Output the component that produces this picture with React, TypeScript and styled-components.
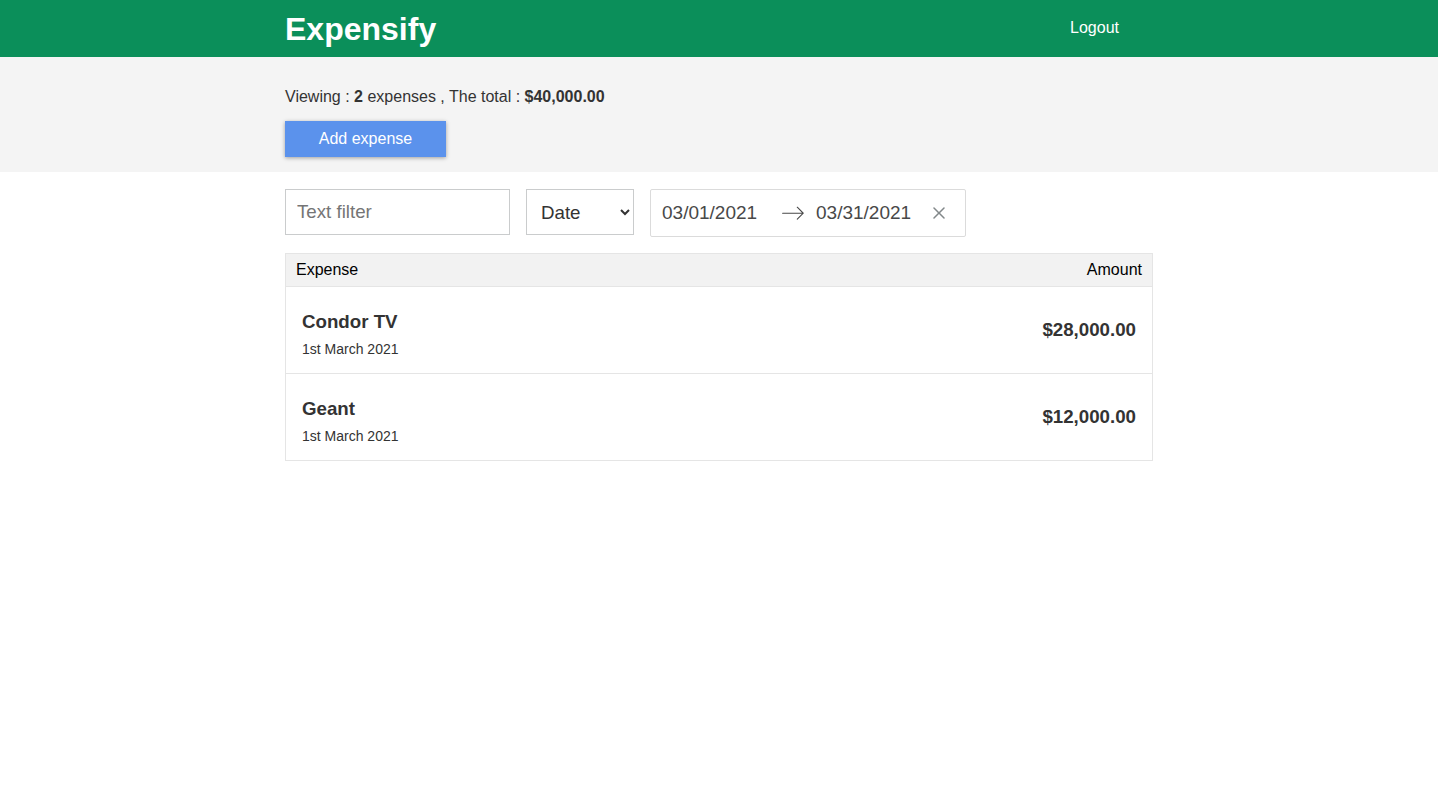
import React from "react";
import styled, { createGlobalStyle } from "styled-components";

const GlobalStyle = createGlobalStyle`
  * { box-sizing: border-box; }
  body {
    margin: 0;
    font-family: "Liberation Sans", Arial, sans-serif;
    color: #333333;
    background: #ffffff;
  }
`;

const Container = styled.div`
  width: 868px;
  margin: 0 auto;
`;

const TopBar = styled.header`
  background: #0b8f5a;
`;

const TopBarInner = styled(Container)`
  height: 57px;
  display: flex;
  align-items: center;
  justify-content: space-between;
`;

const Logo = styled.h1`
  margin: 0;
  font-size: 32px;
  font-weight: 700;
  color: #ffffff;
  line-height: 1;
`;

const LogoutButton = styled.button`
  background: none;
  border: none;
  color: #ffffff;
  font-family: "Liberation Sans", Arial, sans-serif;
  font-size: 16px;
  padding: 6px 34px 8px 8px;
  cursor: pointer;
`;

const Summary = styled.section`
  background: #f4f4f4;
  padding: 31px 0 15px;
`;

const SummaryText = styled.p`
  margin: 0 0 15px;
  font-size: 16px;
  line-height: 18px;
  color: #333333;
  b { font-weight: 700; }
`;

const AddButton = styled.button`
  width: 161px;
  height: 36px;
  background: #5b92ec;
  color: #ffffff;
  border: none;
  font-family: "Liberation Sans", Arial, sans-serif;
  font-size: 16px;
  box-shadow: 0 1px 4px rgba(0, 0, 0, 0.35);
  cursor: pointer;
`;

const Filters = styled(Container)`
  display: flex;
  align-items: flex-start;
  gap: 16px;
  margin-top: 17px;
`;

const TextInput = styled.input`
  width: 225px;
  height: 46px;
  border: 1px solid #cacccd;
  padding: 0 11px;
  font-family: "Liberation Sans", Arial, sans-serif;
  font-size: 18.72px;
  color: #333;
  outline: none;
  &::placeholder { color: #757575; }
`;

const SortSelect = styled.select`
  width: 108px;
  height: 46px;
  border: 1px solid #cacccd;
  background: #ffffff;
  padding: 0 10px;
  font-family: "Liberation Sans", Arial, sans-serif;
  font-size: 18.72px;
  color: #333;
  outline: none;
`;

const RangeBox = styled.div`
  position: relative;
  display: flex;
  align-items: center;
  border: 1px solid #dbdbdb;
  border-radius: 2px;
  padding-right: 30px;
  background: #ffffff;
`;

const DateInput = styled.input`
  width: 130px;
  padding: 11px 11px 9px;
  border: none;
  border-bottom: 2px solid transparent;
  font-family: "Liberation Sans", Arial, sans-serif;
  font-size: 19px;
  line-height: 24px;
  color: #484848;
  background: transparent;
  outline: none;
`;

const ArrowIcon = styled.svg`
  width: 24px;
  height: 24px;
  fill: #484848;
  flex-shrink: 0;
`;

const ClearButton = styled.button`
  position: absolute;
  right: 0;
  top: 50%;
  transform: translateY(-50%);
  margin: 0 10px 0 5px;
  padding: 10px;
  background: none;
  border: 0;
  display: flex;
  cursor: pointer;
`;

const ClearIcon = styled.svg`
  width: 12px;
  height: 12px;
  fill: #82888a;
`;

const Table = styled(Container)`
  margin-top: 16px;
  border: 1px solid #e5e5e5;
`;

const TableHead = styled.div`
  display: flex;
  justify-content: space-between;
  background: #f2f2f2;
  padding: 7px 10px;
  font-size: 16px;
  line-height: 18px;
  color: #000000;
  border-bottom: 1px solid #e5e5e5;
`;

const Row = styled.div`
  display: flex;
  justify-content: space-between;
  align-items: center;
  padding: 24px 16px 16px;
  border-bottom: 1px solid #e5e5e5;
  &:last-child { border-bottom: none; }
`;

const RowTitle = styled.h3`
  margin: 0 0 9px;
  font-size: 18.72px;
  line-height: 21px;
  font-weight: 700;
  color: #333333;
`;

const RowDate = styled.span`
  display: block;
  font-size: 14px;
  line-height: 16px;
  color: #333333;
`;

const RowAmount = styled.h3`
  margin: 0;
  margin-top: -9px;
  font-size: 18.72px;
  font-weight: 700;
  color: #333333;
`;

const expenses = [
  { id: 1, title: "Condor TV", date: "1st March 2021", amount: "$28,000.00" },
  { id: 2, title: "Geant", date: "1st March 2021", amount: "$12,000.00" },
];

export default function App() {
  return (
    <>
      <GlobalStyle />
      <TopBar>
        <TopBarInner>
          <Logo>Expensify</Logo>
          <LogoutButton>Logout</LogoutButton>
        </TopBarInner>
      </TopBar>
      <Summary>
        <Container>
          <SummaryText>
            Viewing : <b>2</b> expenses , The total : <b>$40,000.00</b>
          </SummaryText>
          <AddButton>Add expense</AddButton>
        </Container>
      </Summary>
      <Filters>
        <TextInput placeholder="Text filter" />
        <SortSelect defaultValue="date">
          <option value="date">Date</option>
          <option value="amount">Amount</option>
        </SortSelect>
        <RangeBox>
          <DateInput defaultValue="03/01/2021" />
          <ArrowIcon viewBox="0 0 1000 1000">
            <path d="M694 242l249 250c12 11 12 21 1 32L694 774c-5 5-10 7-16 7s-11-2-16-7c-11-11-11-21 0-32l210-210H68c-13 0-23-10-23-23s10-23 23-23h806L662 275c-21-22 11-54 32-33z" />
          </ArrowIcon>
          <DateInput defaultValue="03/31/2021" />
          <ClearButton aria-label="Clear dates">
            <ClearIcon viewBox="0 0 12 12">
              <path
                fillRule="evenodd"
                d="M11.53.47a.75.75 0 0 0-1.061 0l-4.47 4.47L1.53.47A.75.75 0 1 0 .47 1.53l4.47 4.47-4.47 4.47a.75.75 0 1 0 1.061 1.061l4.47-4.47 4.47 4.47a.75.75 0 1 0 1.061-1.061l-4.47-4.47 4.47-4.47a.75.75 0 0 0 0-1.061z"
              />
            </ClearIcon>
          </ClearButton>
        </RangeBox>
      </Filters>
      <Table>
        <TableHead>
          <span>Expense</span>
          <span>Amount</span>
        </TableHead>
        {expenses.map((e) => (
          <Row key={e.id}>
            <div>
              <RowTitle>{e.title}</RowTitle>
              <RowDate>{e.date}</RowDate>
            </div>
            <RowAmount>{e.amount}</RowAmount>
          </Row>
        ))}
      </Table>
    </>
  );
}
